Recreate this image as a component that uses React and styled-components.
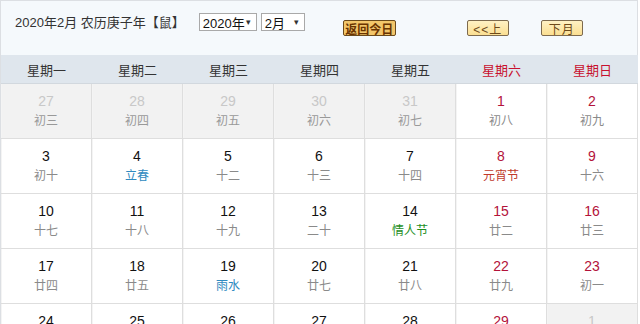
import styled, { createGlobalStyle } from 'styled-components';

const GlobalStyle = createGlobalStyle`
  body {
    margin: 0;
    background: #ffffff;
    font-family: "Liberation Sans", "Noto Sans CJK SC", sans-serif;
  }
`;

const Calendar = styled.div`
  width: 638px;
  border: 1px solid #dcdfe3;
  border-bottom: none;
  box-sizing: border-box;
`;

const TopBar = styled.div`
  height: 54px;
  background: #f5f9fc;
  display: flex;
  align-items: flex-start;
  padding: 12px 0 0 14px;
  box-sizing: border-box;
  font-size: 13px;
  color: #333;
`;

const Title = styled.span`
  line-height: 20px;
  margin-right: 14px;
`;

const FakeSelect = styled.div`
  width: ${p => p.w}px;
  height: 18px;
  margin-right: 4px;
  background: #fff;
  border: 1px solid #a9a9a9;
  box-sizing: border-box;
  display: flex;
  align-items: center;
  justify-content: space-between;
  padding: 0 5px 0 3px;
  font-size: 13px;
  color: #111;

  &::after {
    content: '▾';
    font-size: 9px;
    color: #333;
  }
`;

const Btn = styled.div`
  margin-top: 7px;
  margin-left: ${p => p.ml}px;
  width: ${p => p.w}px;
  height: 16px;
  box-sizing: border-box;
  border: 1px solid ${p => (p.strong ? '#6b4a1c' : '#7d6a4e')};
  border-radius: 2px;
  background: ${p => (p.strong ? '#f3c66a' : 'linear-gradient(#fff1c4, #fbdf92)')};
  color: ${p => (p.strong ? '#6a3300' : '#6e4a1a')};
  font-size: 12px;
  font-weight: ${p => (p.strong ? 'bold' : 'normal')};
  display: flex;
  align-items: center;
  justify-content: center;
  letter-spacing: ${p => (p.strong ? '0' : '1px')};
`;

const Grid = styled.div`
  display: grid;
  grid-template-columns: repeat(7, 91px);
`;

const WeekHead = styled.div`
  height: 28px;
  background: #dfe6ed;
  display: flex;
  align-items: center;
  justify-content: center;
  font-size: 13px;
  color: ${p => (p.red ? '#c8102e' : '#333')};
  border-bottom: 1px solid #d2d8de;
`;

const Cell = styled.div`
  height: 55px;
  box-sizing: border-box;
  border-right: 1px solid #dedede;
  border-bottom: 1px solid #dedede;
  box-shadow: inset 1px 0 0 #f4f4f4;
  background: ${p => (p.faded ? '#f2f2f2' : '#fff')};
  display: flex;
  flex-direction: column;
  align-items: center;
  padding-top: 7px;
`;

const DayNum = styled.div`
  font-size: 14px;
  line-height: 20px;
  color: ${p => (p.faded ? '#c8c8c8' : p.weekend ? '#b3123a' : '#111')};
`;

const tones = {
  plain: '#8a8a8a',
  faded: '#999',
  term: '#2f8ac0',
  fest: '#c0392b',
  love: '#1e8f1e',
};

const Lunar = styled.div`
  font-size: 12px;
  line-height: 20px;
  color: ${p => tones[p.tone]};
`;

const weekdays = ['星期一', '星期二', '星期三', '星期四', '星期五', '星期六', '星期日'];

const days = [
  [27, '初三', 'faded'], [28, '初四', 'faded'], [29, '初五', 'faded'], [30, '初六', 'faded'], [31, '初七', 'faded'], [1, '初八'], [2, '初九'],
  [3, '初十'], [4, '立春', 'term'], [5, '十二'], [6, '十三'], [7, '十四'], [8, '元宵节', 'fest'], [9, '十六'],
  [10, '十七'], [11, '十八'], [12, '十九'], [13, '二十'], [14, '情人节', 'love'], [15, '廿二'], [16, '廿三'],
  [17, '廿四'], [18, '廿五'], [19, '雨水', 'term'], [20, '廿七'], [21, '廿八'], [22, '廿九'], [23, '初一'],
  [24, '初二'], [25, '初三'], [26, '初四'], [27, '初五'], [28, '初六'], [29, '初七'], [1, '初八', 'faded'],
];

export default function App() {
  return (
    <>
      <GlobalStyle />
      <Calendar>
        <TopBar>
          <Title>2020年2月 农历庚子年【鼠】</Title>
          <FakeSelect w={58}>2020年</FakeSelect>
          <FakeSelect w={44}>2月</FakeSelect>
          <Btn strong ml={34} w={53}>返回今日</Btn>
          <Btn ml={71} w={42}>&lt;&lt;上</Btn>
          <Btn ml={32} w={42}>下月</Btn>
        </TopBar>
        <Grid>
          {weekdays.map((w, i) => (
            <WeekHead key={w} red={i >= 5}>{w}</WeekHead>
          ))}
          {days.map(([n, lunar, tone], i) => {
            const faded = tone === 'faded';
            const weekend = i % 7 >= 5;
            return (
              <Cell key={i} faded={faded}>
                <DayNum faded={faded} weekend={weekend}>{n}</DayNum>
                <Lunar tone={tone || 'plain'}>{lunar}</Lunar>
              </Cell>
            );
          })}
        </Grid>
      </Calendar>
    </>
  );
}
